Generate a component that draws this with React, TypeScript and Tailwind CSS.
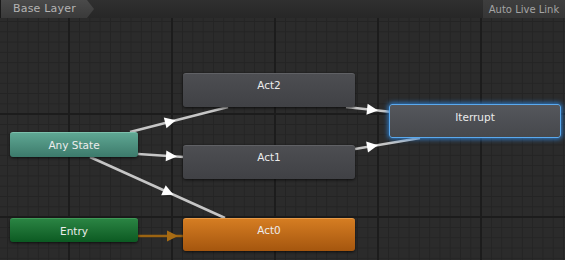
import React from "react";

type Node = {
  label: string;
  x: number;
  y: number;
  w: number;
  h: number;
  tone: string;
  pad: string;
};

const nodes: Node[] = [
  { label: "Any State", x: 10, y: 114, w: 128, h: 25, tone: "bg-gradient-to-b from-[#5fa793] to-[#3c7a6b] border-t border-[#7cc0ac]", pad: "items-center" },
  { label: "Entry", x: 10, y: 200, w: 128, h: 24, tone: "bg-gradient-to-b from-[#2a8443] to-[#0b5a22] border-t border-[#3f9a58]", pad: "items-center" },
  { label: "Act2", x: 183, y: 55, w: 172, h: 34, tone: "bg-gradient-to-b from-[#4d4e52] to-[#404145] border-t border-[#606165]", pad: "items-start pt-[4px]" },
  { label: "Act1", x: 183, y: 127, w: 172, h: 34, tone: "bg-gradient-to-b from-[#4d4e52] to-[#404145] border-t border-[#606165]", pad: "items-start pt-[4px]" },
  { label: "Act0", x: 183, y: 200, w: 172, h: 33, tone: "bg-gradient-to-b from-[#d57d22] to-[#a5560e] border-t border-[#e69a48]", pad: "items-start pt-[4px]" },
];

type Edge = { x1: number; y1: number; x2: number; y2: number; ax: number; ay: number; color: string };

const edges: Edge[] = [
  { x1: 130, y1: 114, x2: 228, y2: 89, ax: 170, ay: 103.7, color: "#c6c6c6" },
  { x1: 138, y1: 136, x2: 184, y2: 139, ax: 171, ay: 138.2, color: "#c6c6c6" },
  { x1: 90, y1: 139, x2: 225, y2: 200, ax: 168, ay: 174.3, color: "#c6c6c6" },
  { x1: 346, y1: 89, x2: 392, y2: 94, ax: 372, ay: 91.8, color: "#c6c6c6" },
  { x1: 355, y1: 131, x2: 420, y2: 120, ax: 372, ay: 128.2, color: "#c6c6c6" },
  { x1: 138, y1: 218, x2: 184, y2: 218, ax: 172, ay: 218, color: "#9c6412" },
];

function Arrow({ e }: { e: Edge }) {
  const a = (Math.atan2(e.y2 - e.y1, e.x2 - e.x1) * 180) / Math.PI;
  const fill = e.color === "#9c6412" ? "#a86c14" : "#ffffff";
  return (
    <g transform={`translate(${e.ax} ${e.ay}) rotate(${a})`}>
      <polygon points="6,0 -5,-5.5 -5,5.5" fill={fill} />
    </g>
  );
}

export default function App() {
  return (
    <div className="w-[565px] h-[260px] flex flex-col bg-[#2a2a2a] overflow-hidden font-['DejaVu_Sans',sans-serif]">
      {/* breadcrumb bar */}
      <div className="h-[18px] flex items-stretch bg-gradient-to-b from-[#303030] to-[#272727] border-l border-[#1a1a1a]">
        <div className="w-[93px] flex items-center pl-[12px] bg-gradient-to-b from-[#4a4a4a] to-[#3a3a3a] text-[11px] tracking-[0.2px] text-[#b4b4b4] [clip-path:polygon(0_0,86px_0,93px_50%,86px_100%,0_100%)]">
          Base Layer
        </div>
        <div className="flex-1" />
        <div className="w-[82px] flex items-center justify-center bg-gradient-to-b from-[#3e3e3e] to-[#363636] text-[10px] text-[#a4a4a4]">
          Auto Live Link
        </div>
      </div>

      {/* graph canvas */}
      <div className="relative flex-1 bg-[#2b2b2b] bg-[image:linear-gradient(to_right,#1c1c1c_2px,transparent_2px),linear-gradient(to_bottom,#1c1c1c_2px,transparent_2px),linear-gradient(to_right,#242424_1px,transparent_1px),linear-gradient(to_bottom,#242424_1px,transparent_1px)] bg-[size:103px_103px,103px_103px,10.3px_10.3px,10.3px_10.3px] bg-[position:68px_95px,68px_95px,7px_3px,7px_3px]">
        <svg className="absolute inset-0" width="565" height="242">
          {edges.map((e, i) => (
            <line key={i} x1={e.x1} y1={e.y1} x2={e.x2} y2={e.y2} stroke={e.color} strokeWidth="2.5" />
          ))}
          {edges.map((e, i) => (
            <Arrow key={i} e={e} />
          ))}
        </svg>

        {nodes.map((n) => (
          <div
            key={n.label}
            className={`absolute flex justify-center rounded-[3px] shadow-[0_1px_3px_rgba(0,0,0,0.7)] text-[10.5px] leading-[14px] text-[#ececec] ${n.tone} ${n.pad}`}
            style={{ left: n.x, top: n.y, width: n.w, height: n.h }}
          >
            {n.label}
          </div>
        ))}

        {/* selected state */}
        <div
          className="absolute flex justify-center items-start pt-[5px] rounded-[3px] border border-[#5aa9ee] bg-gradient-to-b from-[#55575c] to-[#46484c] shadow-[0_0_5px_1px_#2f7fd0] text-[10.5px] leading-[14px] text-[#ececec]"
          style={{ left: 389, top: 86, width: 172, height: 34 }}
        >
          Iterrupt
        </div>
      </div>
    </div>
  );
}
